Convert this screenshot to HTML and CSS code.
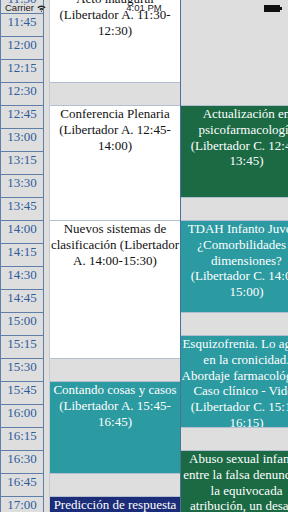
FILE: index.html
```html
<!DOCTYPE html>
<html>
<head>
	<title>Agenda</title>
	<meta charset="utf-8" />
	<link rel="stylesheet" href="styles.css">
</head>
<body>
	<div class="statusbar">
		<span class="carrier">Carrier
			<svg class="wifi" width="9" height="7" viewBox="0 0 9 7"><path d="M0.3 2.2 A6 6 0 0 1 8.7 2.2 L7.6 3.3 A4.4 4.4 0 0 0 1.4 3.3 Z M2.2 4.1 A3.2 3.2 0 0 1 6.8 4.1 L5.7 5.2 A1.7 1.7 0 0 0 3.3 5.2 Z M4.5 7 L3.7 6 A1.1 1.1 0 0 1 5.3 6 Z" fill="#222"/></svg>
		</span>
		<span class="clock">4:01 PM</span>
		<span class="battery"><span class="level"></span></span>
	</div>

	<div class="schedule">
		<div class="times">
			<div class="time">11:30</div>
			<div class="time">11:45</div>
			<div class="time">12:00</div>
			<div class="time">12:15</div>
			<div class="time">12:30</div>
			<div class="time">12:45</div>
			<div class="time">13:00</div>
			<div class="time">13:15</div>
			<div class="time">13:30</div>
			<div class="time">13:45</div>
			<div class="time">14:00</div>
			<div class="time">14:15</div>
			<div class="time">14:30</div>
			<div class="time">14:45</div>
			<div class="time">15:00</div>
			<div class="time">15:15</div>
			<div class="time">15:30</div>
			<div class="time">15:45</div>
			<div class="time">16:00</div>
			<div class="time">16:15</div>
			<div class="time">16:30</div>
			<div class="time">16:45</div>
			<div class="time">17:00</div>
			<div class="time">17:15</div>
		</div>

		<!-- sala Libertador A -->
		<div class="room">
			<div class="event white r4">Acto inaugural (Libertador A. 11:30-12:30)</div>
			<div class="gap r1"></div>
			<div class="event white r5">Conferencia Plenaria (Libertador A. 12:45-14:00)</div>
			<div class="event white r6">Nuevos sistemas de clasificación (Libertador A. 14:00-15:30)</div>
			<div class="gap r1"></div>
			<div class="event teal r4">Contando cosas y casos (Libertador A. 15:45-16:45)</div>
			<div class="gap r1"></div>
			<div class="event navy r4">Predicción de respuesta terapéutica (Libertador A. 17:00-18:00)</div>
		</div>

		<!-- sala Libertador C -->
		<div class="room">
			<div class="gap r5"></div>
			<div class="event green r4">Actualización en psicofarmacología (Libertador C. 12:45-13:45)</div>
			<div class="gap r1"></div>
			<div class="event teal r4">TDAH Infanto Juvenil ¿Comorbilidades o dimensiones? (Libertador C. 14:00-15:00)</div>
			<div class="gap r1"></div>
			<div class="event teal r4">Esquizofrenia. Lo agudo en la cronicidad. Abordaje farmacológico. Caso clínico - Video (Libertador C. 15:15-16:15)</div>
			<div class="gap r1"></div>
			<div class="event green r4">Abuso sexual infantil: entre la falsa denuncia y la equivocada atribución, un desafío diagnóstico (Libertador C. 16:30-17:30)</div>
		</div>
	</div>
</body>
</html>
```

FILE: styles.css
```css
/* general styles */
* { box-sizing: border-box; }
html, body { margin: 0; height: 512px; overflow: hidden; }
body { background-color: #dedede; font-family: "Liberation Serif", "Times New Roman", serif; font-size: 13px; line-height: 15.75px; position: relative; }

/* status bar */
.statusbar { position: absolute; top: 0; left: 0; right: 0; height: 16px; display: grid; grid-template-columns: 1fr auto 1fr; align-items: center; font-family: "Liberation Sans", Arial, sans-serif; font-size: 9.5px; line-height: 10px; color: #222; z-index: 2; }
.carrier { padding-left: 5px; display: flex; align-items: center; gap: 3px; }
.clock { text-align: center; }
.battery { justify-self: end; margin-right: 8px; width: 16px; height: 7px; border: 1px solid #111; position: relative; }
.battery::after { content: ""; position: absolute; right: -3px; top: 1px; width: 2px; height: 3px; background-color: #111; }
.battery .level { display: block; height: 100%; background-color: #111; }

/* schedule grid */
.schedule { display: flex; margin-top: -10px; }
.times { width: 44px; flex: none; border-left: 1px solid #5f7fa8; border-right: 1px solid #5f7fa8; margin-right: 5px; }
.time { height: 23px; border-top: 1px solid #5f7fa8; text-align: center; color: #2e5d9c; }

.room { width: 132px; flex: none; display: flex; flex-direction: column; border-left: 1px solid #c3cad6; border-right: 1px solid #4d6f9c; }
.room + .room { border-left: none; }

.gap, .event { flex: none; }
.event { border-top: 1px solid #b3bfd1; text-align: center; overflow: hidden; }
.event + .gap { border-top: 1px solid #b3bfd1; }

.r1 { height: 23px; }
.r4 { height: 92px; }
.r5 { height: 115px; }
.r6 { height: 138px; }

.white { background-color: #fff; color: #111; }
.green { background-color: #1b6a44; color: #fff; }
.teal { background-color: #2b9aa1; color: #fff; }
.navy { background-color: #1b2d78; color: #fff; }
```
